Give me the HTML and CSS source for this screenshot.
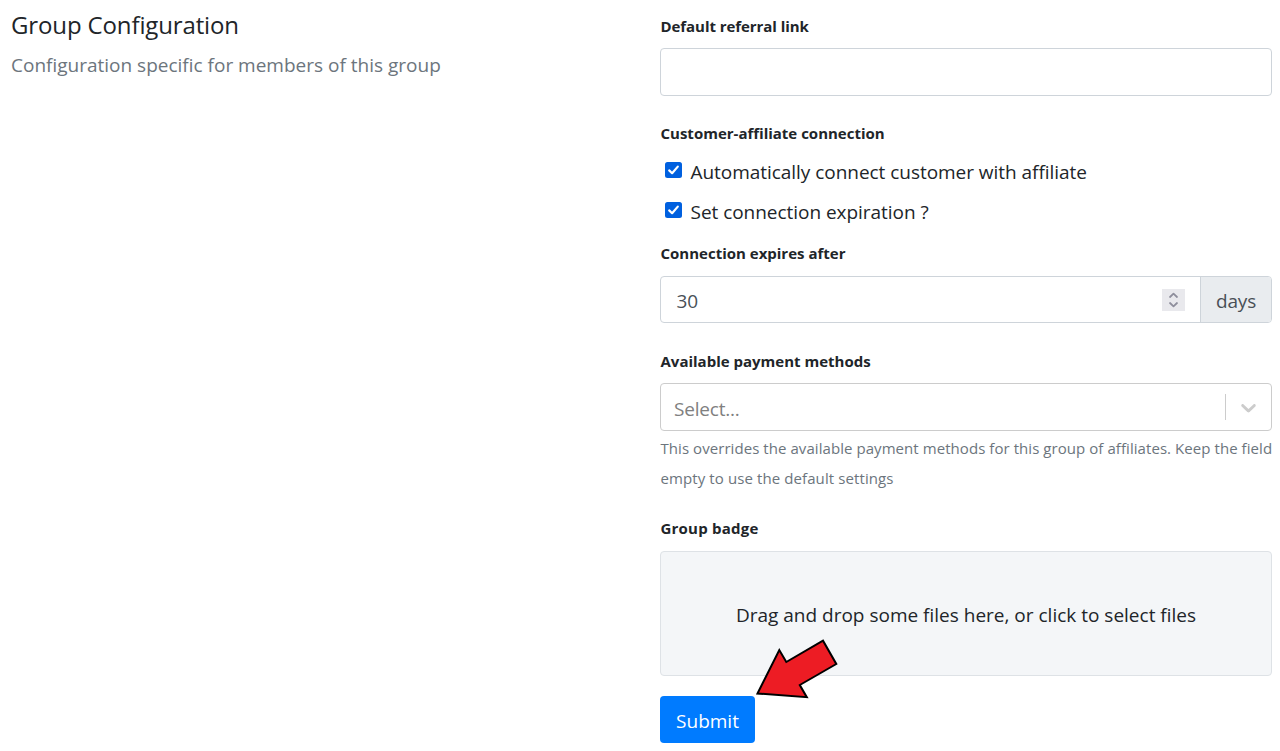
FILE: index.html
```html
<!DOCTYPE html>
<html lang="en">
<head>
<meta charset="utf-8">
<title>Group Configuration</title>
<link rel="stylesheet" href="styles.css">
</head>
<body>
<main class="page">
  <section class="intro">
    <h1 class="title"><span>Group Configuration</span></h1>
    <p class="subtitle"><span>Configuration specific for members of this group</span></p>
  </section>
  <form class="form">
    <label class="label label-link" for="link"><span>Default referral link</span></label>
    <input class="control" id="link" type="text">

    <div class="label label-connection"><span>Customer-affiliate connection</span></div>
    <div class="checks">
      <label class="check"><span class="box"><svg viewBox="0 0 16 16"><path d="M3.7 8.4 6.6 11.2 12.3 4.6"/></svg></span><span class="check-auto">Automatically connect customer with affiliate</span></label>
      <label class="check"><span class="box"><svg viewBox="0 0 16 16"><path d="M3.7 8.4 6.6 11.2 12.3 4.6"/></svg></span><span class="check-expire">Set connection expiration ?</span></label>
    </div>

    <div class="label label-expires"><span>Connection expires after</span></div>
    <div class="group">
      <div class="number"><span>30</span>
        <span class="spinner"><svg viewBox="0 0 23 22"><path d="M8 8 11.5 4.7 15 8M8 14 11.5 17.3 15 14"/></svg></span>
      </div>
      <div class="addon">days</div>
    </div>

    <div class="label label-methods"><span>Available payment methods</span></div>
    <div class="select"><span class="placeholder">Select...</span>
      <span class="divider"></span>
      <svg class="chevron" viewBox="0 0 20 20"><path d="M4.516 7.548c0.436-0.446 1.043-0.481 1.576 0l3.908 3.747 3.908-3.747c0.533-0.481 1.141-0.446 1.574 0 0.436 0.445 0.408 1.197 0 1.615-0.406 0.418-4.695 4.502-4.695 4.502-0.217 0.223-0.502 0.335-0.787 0.335s-0.57-0.112-0.789-0.335c0 0-4.287-4.084-4.695-4.502s-0.436-1.17 0-1.615z"/></svg>
    </div>
    <p class="help"><span class="help-a">This overrides the available payment methods for this group of affiliates. Keep the field</span> <span class="help-b">empty to use the default settings</span></p>

    <div class="label label-badge"><span>Group badge</span></div>
    <div class="dropzone"><span>Drag and drop some files here, or click to select files</span></div>
    <div class="actions">
      <button class="submit" type="button">Submit</button>
      <svg class="arrow" viewBox="0 0 84 62"><path d="M3.5 55.5 25.3 12 32.3 24 69 2.7 82.3 26 45.8 47 52.8 59.2Z"/></svg>
    </div>
  </form>
</main>
</body>
</html>
```
FILE: styles.css
```css
* { box-sizing: border-box; }
body { margin: 0; background: #fff; color: #212529; font: 19px/30px "Open Sans", "Noto Sans", sans-serif; }
.page { display: grid; grid-template-columns: 649px 612px; padding-left: 11px; height: 751px; overflow: hidden; }
.title, .subtitle, .help { margin: 0; font-weight: 400; white-space: nowrap; }
.title { padding-top: 10px; font-size: 24px; letter-spacing: -0.13px; }
.subtitle { padding-top: 10px; color: #6c757d; }
.form { display: flex; flex-direction: column; padding-top: 15px; }
.label { height: 24px; margin-bottom: 10px; padding-left: 0.5px; font-size: 15px; line-height: 24px; font-weight: 700; white-space: nowrap; }
.label-link { margin-bottom: 9px; line-height: 22px; letter-spacing: -0.06px; }
.control { width: 100%; height: 48px; border: 1px solid #ced4da; border-radius: 4px; background: #fff; }
.label-connection { margin-top: 26px; margin-bottom: 11px; line-height: 22px; }
.checks { display: flex; flex-direction: column; gap: 10px; padding-left: 5px; }
.check { display: flex; height: 30px; gap: 8.5px; white-space: nowrap; letter-spacing: -0.04px; }
.box { width: 17px; height: 16px; margin-top: 5px; border-radius: 2.5px; background: #0060df; }
.box svg { display: block; width: 17px; height: 16px; fill: none; stroke: #fff; stroke-width: 2.2; stroke-linecap: round; stroke-linejoin: round; }
.label-expires { margin-top: 15px; line-height: 22px; }
.group { display: flex; height: 47px; border: 1px solid #ced4da; border-radius: 4px; overflow: hidden; color: #495057; }
.number { display: flex; flex: 1; align-items: center; justify-content: space-between; padding: 2px 15px 0 15.5px; }
.spinner { width: 23px; height: 22px; margin-bottom: 2px; background: #e9e9ed; }
.spinner svg { display: block; fill: none; stroke: #8f8f9d; stroke-width: 1.8; stroke-linecap: round; stroke-linejoin: round; }
.addon { display: flex; align-items: center; justify-content: center; width: 71px; padding-top: 3px; border-left: 1px solid #ced4da; background: #e9ecef; letter-spacing: -0.15px; }
.label-methods { margin-top: 26px; }
.select { display: flex; align-items: center; height: 48px; padding: 0 10px 0 13px; border: 1px solid #ccc; border-radius: 4px; color: #808080; }
.placeholder { flex: 1; padding-top: 3px; letter-spacing: -0.2px; }
.divider { width: 1px; height: 26px; margin-right: 10px; background: #ccc; }
.chevron { width: 25px; height: 25px; fill: #ccc; }
.help { padding-top: 2px; padding-left: 0.5px; color: #6c757d; font-size: 15px; }
.help span { display: table; }
.help-a { letter-spacing: 0.062px; }
.help-b { letter-spacing: 0.1px; }
.label-badge { margin-top: 23px; margin-bottom: 11px; letter-spacing: 0.22px; }
.dropzone { display: flex; align-items: center; justify-content: center; height: 125px; padding-top: 3px; border: 1px solid #dee2e6; border-radius: 4px; background: #f4f6f8; white-space: nowrap; }
.actions { position: relative; margin-top: 20px; }
.submit { display: block; width: 95px; height: 47px; padding: 3px 0 0; border: 0; border-radius: 4px; background: #007bff; color: #fff; font: inherit; }
.arrow { position: absolute; left: 94px; top: -58px; width: 84px; height: 62px; fill: #ed1c24; stroke: #000; stroke-width: 2; stroke-linejoin: miter; }
```
